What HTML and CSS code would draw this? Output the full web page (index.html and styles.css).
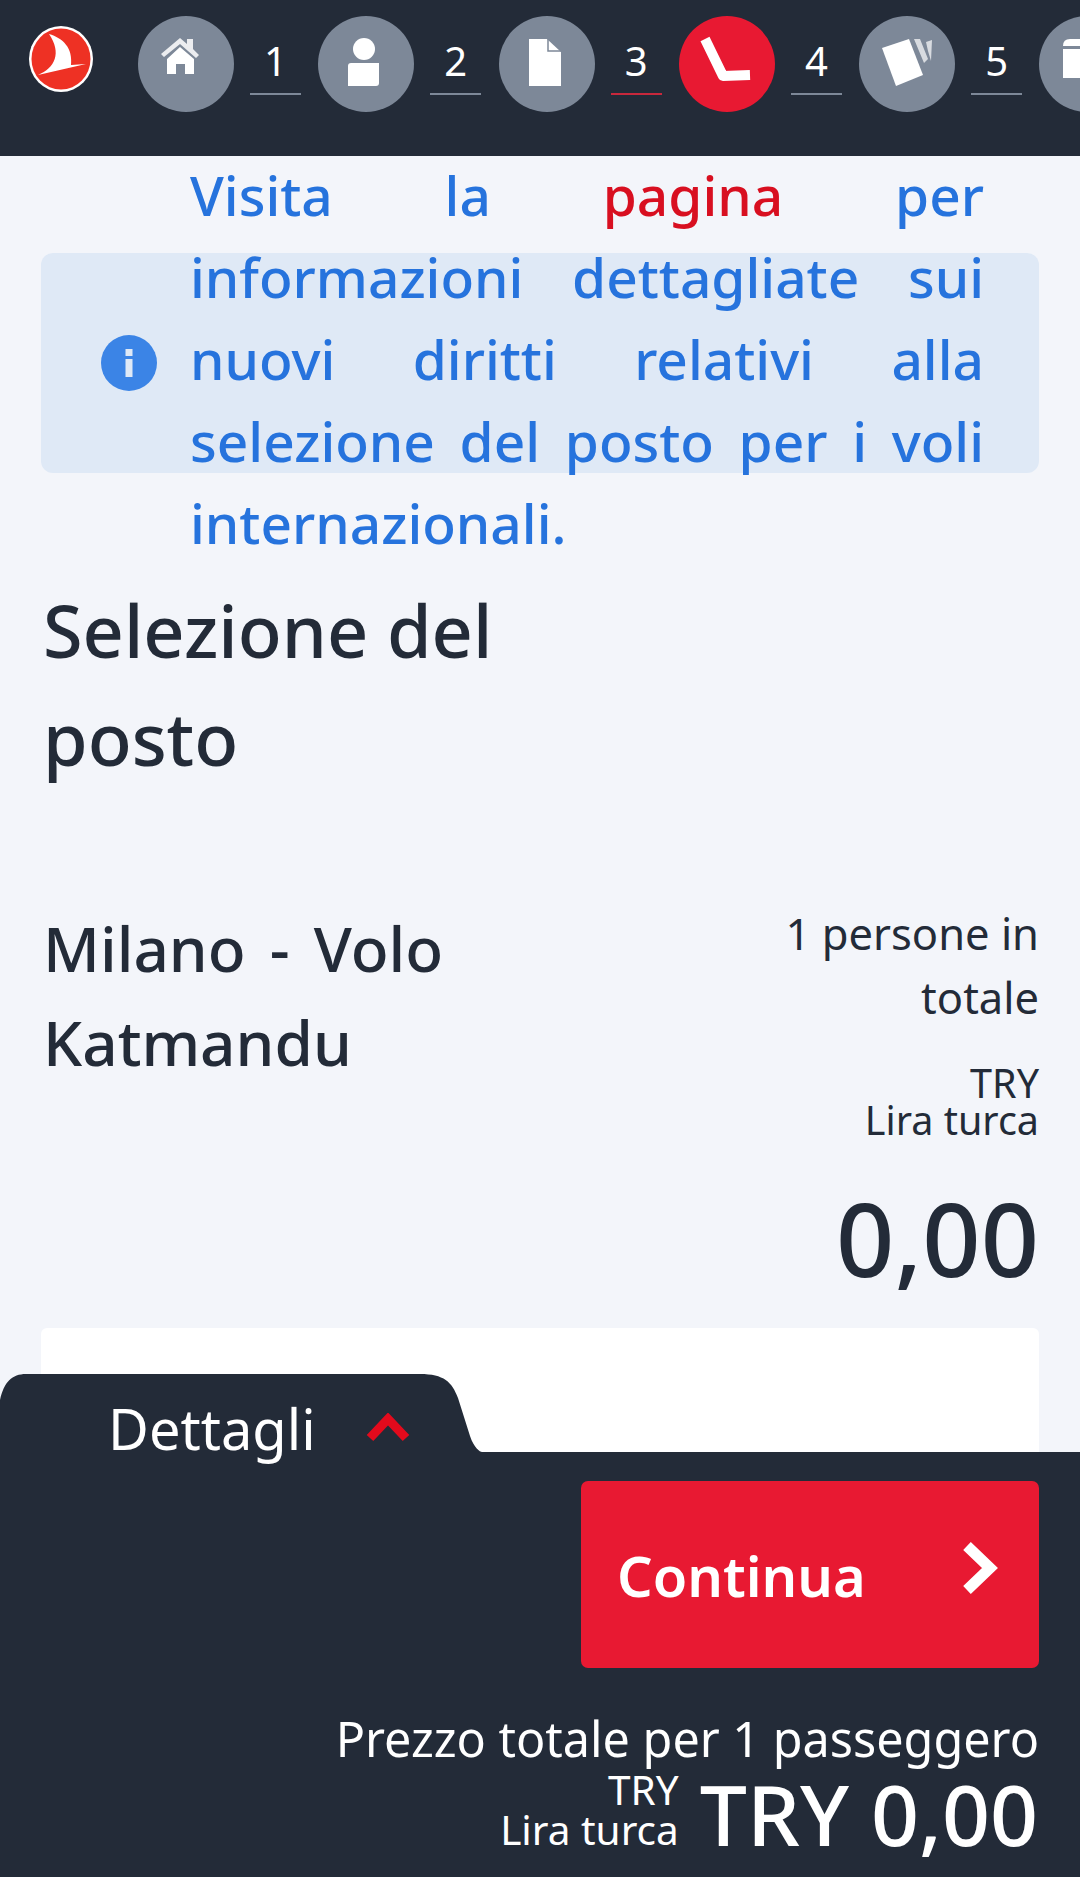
FILE: index.html
```html
<!DOCTYPE html>
<html lang="it">
<head>
    <meta charset="UTF-8">
    <meta name="viewport" content="width=device-width, initial-scale=1.0">
    <title>Selezione del posto</title>
    <link rel="stylesheet" href="styles.css">
</head>
<body>
    <header class="top-bar">
        <svg class="logo" viewBox="0 0 64 66">
            <ellipse cx="32" cy="33" rx="32" ry="33" fill="#fff"/>
            <ellipse cx="32" cy="33" rx="29.5" ry="30.5" fill="#ee3124"/>
            <path d="M20 8 C34 12 44 22 42 39 L57 38 L9 49 C26 42 33 27 20 8 Z" fill="#fff"/>
        </svg>
        <nav class="steps">
            <div class="step">
                <span class="step-circle">
                    <svg viewBox="0 0 96 96"><path d="M23 38 L42 22 L49 28 L49 23 L55 23 L55 33 L61 39 L58 42 L42 28 L26 41 Z" fill="#fff" opacity=".85"/><path d="M29 43 L42 31 L56 43 L56 58 L47 58 L47 48 L38 48 L38 58 L29 58 Z" fill="#fff"/></svg>
                </span>
                <span class="step-num">1</span>
            </div>
            <div class="step">
                <span class="step-circle">
                    <svg viewBox="0 0 96 96"><circle cx="46" cy="33" r="11" fill="#fff"/><path d="M30 50 Q30 47 33 47 L61 47 L61 67 Q61 70 58 70 L30 70 Z" fill="#fff"/></svg>
                </span>
                <span class="step-num">2</span>
            </div>
            <div class="step">
                <span class="step-circle">
                    <svg viewBox="0 0 96 96"><path d="M30 23 L48 23 L62 36 L62 70 L30 70 Z" fill="#fff"/><path d="M49 23 L49 35 L62 35" fill="none" stroke="#7d8898" stroke-width="1.5"/></svg>
                </span>
                <span class="step-num active">3</span>
            </div>
            <div class="step">
                <span class="step-circle current">
                    <svg viewBox="0 0 96 96"><path d="M26 23 L44 60 L71 59" fill="none" stroke="#fff" stroke-width="10" stroke-linejoin="round"/></svg>
                </span>
                <span class="step-num">4</span>
            </div>
            <div class="step">
                <span class="step-circle">
                    <svg viewBox="0 0 96 96"><path d="M23 32 L50 23 L64 59 L37 70 Z" fill="#fff"/><path d="M55 23 L61 23 L69 43 L65 47 Z M67 26 L73 24 L72 45 L69 35 Z" fill="#fff" opacity=".7"/></svg>
                </span>
                <span class="step-num">5</span>
            </div>
            <div class="step">
                <span class="step-circle">
                    <svg viewBox="0 0 96 96"><path d="M24 30 Q24 23 31 23 L72 23 L72 30 Z M24 33 L72 33 L72 62 L24 62 Z" fill="#fff"/></svg>
                </span>
            </div>
        </nav>
    </header>

    <main class="content">
        <div class="notice">
            <svg class="notice-icon" viewBox="0 0 56 56">
                <circle cx="28" cy="28" r="28" fill="#3b84e6"/>
                <rect x="24.5" y="14" width="7" height="7" fill="#dfe9f6"/>
                <rect x="24.5" y="24" width="7" height="18" fill="#dfe9f6"/>
            </svg>
            <p class="notice-text">Visita la <a class="notice-link">pagina</a> per informazioni dettagliate sui nuovi diritti relativi alla selezione del posto per i voli internazionali.</p>
        </div>

        <h1 class="page-title">Selezione del posto</h1>

        <section class="flight-row">
            <h2 class="flight-name">Milano - Volo Katmandu</h2>
            <div class="flight-summary">
                <p class="people">1 persone in totale</p>
                <p class="currency">TRY<br>Lira turca</p>
                <p class="amount">0,00</p>
            </div>
        </section>

        <div class="seat-card"></div>
    </main>

    <footer class="bottom-bar">
        <div class="details-tab">
            <svg class="tab-shape" viewBox="0 0 482 78" preserveAspectRatio="none">
                <path d="M0 26 C4 8 12 0 26 0 L420 0 C444 0 452 8 458 24 L470 62 C474 74 480 78 482 78 L0 78 Z" fill="#232b38"/>
            </svg>
            <span class="tab-label">Dettagli</span>
            <svg class="tab-chevron" viewBox="0 0 46 30"><path d="M5 25 L23 6 L41 25" fill="none" stroke="#e30a1c" stroke-width="9"/></svg>
        </div>
        <div class="bottom-body">
            <button class="continue-btn">
                <span>Continua</span>
                <svg viewBox="0 0 36 52"><path d="M5 4 L28 26 L5 48" fill="none" stroke="#fff" stroke-width="11"/></svg>
            </button>
            <p class="total-label">Prezzo totale per 1 passeggero</p>
            <div class="total-row">
                <p class="total-currency">TRY<br>Lira turca</p>
                <p class="total-amount">TRY 0,00</p>
            </div>
        </div>
    </footer>
</body>
</html>
```

FILE: styles.css
```css
* {
    box-sizing: border-box;
    margin: 0;
    padding: 0;
}

body {
    font-family: 'Noto Sans', sans-serif;
    background: #f3f5fa;
    color: #232b38;
    width: 1080px;
    height: 1877px;
    overflow: hidden;
    position: relative;
}

.top-bar {
    background: #232b38;
    height: 156px;
    display: flex;
    padding: 26px 0 0 29px;
    overflow: hidden;
}

.logo {
    width: 64px;
    height: 66px;
    flex: none;
    margin-right: 45px;
}

.steps {
    display: flex;
    margin-top: -10px;
}

.step {
    display: flex;
    flex: none;
    width: 180.3px;
}

.step-circle {
    display: block;
    flex: none;
    width: 96px;
    height: 96px;
    border-radius: 50%;
    background: #7d8898;
}

.step-circle svg {
    display: block;
    width: 96px;
    height: 96px;
}

.step-circle.current {
    background: #e81932;
}

.step-num {
    width: 51px;
    height: 79px;
    margin-left: 16px;
    color: #fff;
    font-size: 40px;
    text-align: center;
    line-height: 90px;
    border-bottom: 2px solid #7d8898;
}

.step-num.active {
    border-bottom-color: #c8283c;
}

.content {
    padding: 0 41px;
}

.notice {
    display: flex;
    align-items: center;
    height: 220px;
    margin-top: 97px;
    background: #dfe9f6;
    border-radius: 12px;
    padding: 0 55px 0 60px;
}

.notice-icon {
    width: 56px;
    height: 56px;
    flex: none;
    margin-right: 33px;
}

.notice-text {
    font-size: 55px;
    line-height: 82px;
    font-weight: 500;
    color: #2673dd;
    text-align: justify;
    margin-top: -8px;
}

.notice-link {
    color: #d80f20;
}

.page-title {
    font-size: 72px;
    font-weight: 500;
    line-height: 108px;
    width: 520px;
    margin: 103px 0 0 2px;
}

.flight-row {
    display: flex;
    justify-content: space-between;
    margin-top: 109px;
}

.flight-name {
    font-size: 62px;
    font-weight: 500;
    line-height: 94px;
    width: 450px;
    margin-left: 2px;
    word-spacing: 8px;
}

.flight-summary {
    width: 300px;
    text-align: right;
}

.people {
    font-size: 43.5px;
    line-height: 64px;
}

.currency {
    font-size: 39.5px;
    line-height: 37px;
    margin-top: 36px;
}

.amount {
    font-size: 102px;
    font-weight: 500;
    line-height: 120px;
    margin-top: 39px;
}

.seat-card {
    height: 200px;
    margin-top: 30px;
    background: #fff;
    border-radius: 6px 6px 0 0;
}

.bottom-bar {
    position: absolute;
    left: 0;
    right: 0;
    bottom: 0;
    height: 503px;
}

.details-tab {
    position: relative;
    width: 482px;
    height: 78px;
    display: flex;
    align-items: center;
    padding: 30px 0 0 108px;
}

.tab-shape {
    position: absolute;
    left: 0;
    top: 0;
    width: 482px;
    height: 78px;
}

.tab-label {
    position: relative;
    font-size: 56px;
    color: #fff;
    line-height: 78px;
}

.tab-chevron {
    position: relative;
    width: 46px;
    height: 30px;
    margin-left: 49px;
}

.bottom-body {
    background: #232b38;
    height: 425px;
    padding: 29px 41px 0;
    display: flex;
    flex-direction: column;
    align-items: flex-end;
}

.continue-btn {
    display: flex;
    align-items: center;
    justify-content: space-between;
    width: 458px;
    height: 187px;
    padding: 0 41px 0 36px;
    border: none;
    border-radius: 7px;
    background: #e81932;
    color: #fff;
    font-family: inherit;
    font-size: 56px;
    font-weight: 600;
}

.continue-btn svg {
    width: 36px;
    height: 52px;
    margin-top: -14px;
}

.total-label {
    margin-top: 40px;
    font-size: 48.5px;
    line-height: 60px;
    color: #fff;
}

.total-row {
    display: flex;
    align-items: center;
    gap: 21px;
    margin-top: -2px;
    color: #fff;
}

.total-currency {
    font-size: 40.5px;
    line-height: 40px;
    text-align: right;
    padding-bottom: 8px;
}

.total-amount {
    font-size: 84px;
    font-weight: 500;
    line-height: 96px;
    margin-right: 1px;
}
```
